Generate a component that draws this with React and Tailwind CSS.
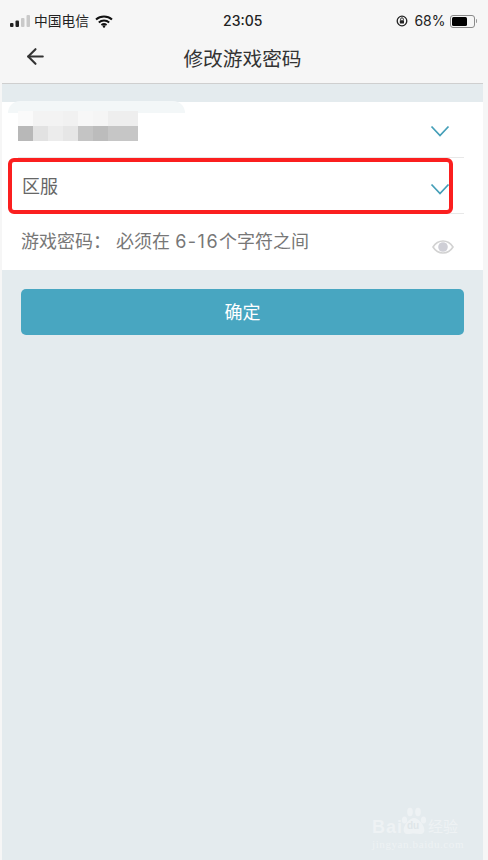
import { ArrowLeft } from 'lucide-react'

const cjk = { fontFamily: '"Inter", "Noto Sans CJK SC", sans-serif' }

const mosaicTop = ['bg-[#fafafa]', 'bg-[#f3f3f3]', 'bg-[#f3f3f3]', 'bg-[#f1f1f1]', 'bg-[#f7f7f7]', 'bg-[#f5f5f5]', 'bg-[#eeeeee]', 'bg-[#eeeeee]']
const mosaicBottom = ['bg-[#b8b8b8]', 'bg-[#e2e2e2]', 'bg-[#ececec]', 'bg-[#e6e6e6]', 'bg-[#c4c4c4]', 'bg-[#bcbcbc]', 'bg-[#c6c6c6]', 'bg-[#c6c6c6]']

const Chevron = () => (
  <svg width="20" height="12" viewBox="0 0 20 12" fill="none" stroke="#459fb8" strokeWidth="1.8">
    <path d="M1.5 1.5 L10 10.5 L18.5 1.5" />
  </svg>
)

const Signal = () => (
  <svg width="21" height="12" viewBox="0 0 21 12" className="mr-[3px]">
    <rect x="0" y="8" width="3.5" height="4" rx="1" fill="#222" />
    <rect x="5.5" y="5.5" width="3.5" height="6.5" rx="1" fill="#222" />
    <rect x="11" y="3" width="3.5" height="9" rx="1" fill="#c9c9c9" />
    <rect x="16.5" y="0" width="3.5" height="12" rx="1" fill="#c9c9c9" />
  </svg>
)

const Wifi = () => (
  <svg width="18" height="13" viewBox="0 0 18 13" fill="none" stroke="#111" strokeWidth="2">
    <path d="M1 4.5 C5.5 0.5 12.5 0.5 17 4.5" />
    <path d="M3.8 7.4 C6.8 4.9 11.2 4.9 14.2 7.4" />
    <path d="M6.4 10 C8 8.9 10 8.9 11.6 10" />
    <circle cx="9" cy="11.5" r="1.2" fill="#111" stroke="none" />
  </svg>
)

const RotationLock = () => (
  <svg width="12" height="12" viewBox="0 0 12 12" fill="none" className="mr-[6px]">
    <circle cx="6" cy="6" r="4.8" stroke="#222" strokeWidth="1.3" />
    <rect x="3.8" y="5.2" width="4.2" height="3.2" rx="0.5" fill="#222" />
    <path d="M4.6 5.2 V4.2 a1.4 1.4 0 0 1 2.8 0 V5.2" stroke="#222" strokeWidth="0.9" />
  </svg>
)

const Battery = () => (
  <div className="flex items-center ml-[4px]">
    <div className="w-[25px] h-[13px] rounded-[3px] border border-[#8a8a8a] p-[1px] flex">
      <div className="w-[15px] bg-black rounded-[1.5px]" />
    </div>
    <div className="w-[1.5px] h-[4px] bg-[#999] ml-[1px] rounded-r-sm" />
  </div>
)

const Eye = () => (
  <svg width="22" height="18" viewBox="0 0 22 18" fill="none">
    <path d="M1 9 C6 1 16 1 21 9 C16 17 6 17 1 9 Z" stroke="#d2d2d2" strokeWidth="1.6" />
    <circle cx="11" cy="9" r="4.8" fill="#cfcfd6" />
  </svg>
)

const BaiduPaw = () => (
  <svg width="26" height="28" viewBox="0 0 26 28" fill="#eef2f4">
    <ellipse cx="3.5" cy="13" rx="2.6" ry="3.6" />
    <ellipse cx="9" cy="5" rx="2.8" ry="4.2" />
    <ellipse cx="17" cy="5" rx="2.8" ry="4.2" />
    <ellipse cx="22.5" cy="13" rx="2.6" ry="3.6" />
    <path d="M13 11 C18 11 25 20 23 25 C21 28.5 16.5 26.5 13 26.5 C9.5 26.5 5 28.5 3 25 C1 20 8 11 13 11 Z" />
  </svg>
)

const App = () => {
  return (
    <div className="relative w-[488px] h-[860px] overflow-hidden bg-[#f6f6f6] pl-[2px] pr-[5px] flex" style={cjk}>
      <div className="flex-1 flex flex-col bg-[#e4ebee]">
        {/* Status bar + title */}
        <header className="h-[84px] bg-[#f6f6f6] border-b border-[#cfcfcf] flex flex-col">
          <div className="h-[40px] pt-[13px] pl-[8px] pr-[6px] flex items-start relative">
            <div className="flex items-center h-[16px]">
              <Signal />
              <span className="text-[13.75px] leading-4 text-[#222]">中国电信</span>
              <span className="ml-[6px]"><Wifi /></span>
            </div>
            <div className="absolute left-[221px] top-[13px] text-[14px] leading-4 font-medium text-[#222]">23:05</div>
            <div className="ml-auto flex items-center h-[16px]">
              <RotationLock />
              <span className="text-[14px] leading-4 text-[#222]">68%</span>
              <Battery />
            </div>
          </div>
          <div className="flex-1 relative flex items-center justify-center pb-[5px]">
            <ArrowLeft size={25} strokeWidth={2} className="absolute left-[21px] top-[4px] text-[#333]" />
            <h1 className="text-[19.7px] leading-6 font-normal text-[#333]">修改游戏密码</h1>
          </div>
        </header>

        <div className="h-[18px]" />

        {/* Form */}
        <section className="bg-white pl-[16px] pr-[19px] relative">
          <div className="absolute left-[6px] top-[-1px] w-[177px] h-[12px] rounded-t-[20px] bg-[#f3f7f8]" />
          <div className="h-[56px] border-b border-[#e8e8e8] flex items-start justify-between pr-[14px]">
            <div className="mt-[9px] relative">
              <div className="flex">
                {mosaicTop.map((c, i) => <div key={i} className={`w-[15px] h-[15px] ${c}`} />)}
              </div>
              <div className="flex">
                {mosaicBottom.map((c, i) => <div key={i} className={`w-[15px] h-[15px] ${c}`} />)}
              </div>
            </div>
            <div className="mt-[23px]"><Chevron /></div>
          </div>
          <div className="h-[56px] border-b border-[#e8e8e8] flex items-start justify-between pl-[4px] pr-[14px]">
            <span className="text-[18px] leading-6 text-[#666] mt-[17px]">区服</span>
            <div className="mt-[25px]"><Chevron /></div>
          </div>
          <div className="h-[56px] flex items-start justify-between pl-[3px] pr-[10px]">
            <span className="text-[18px] leading-6 text-[#777] mt-[16px] whitespace-nowrap">
              游戏密码： 必须在 <span className="tracking-[1.5px]">6-16</span>个字符之间
            </span>
            <div className="mt-[24px]"><Eye /></div>
          </div>
        </section>

        {/* Submit */}
        <div className="pt-[19px] pl-[19px] pr-[19px]">
          <button className="w-full h-[46px] pt-[2px] rounded-[5px] bg-[#48a6c1] text-white text-[18px] leading-6">确定</button>
        </div>
      </div>

      {/* Red annotation drawn on top of the screenshot */}
      <div className="absolute left-[8px] top-[158px] w-[445px] h-[56px] rounded-[6px] border-[4px] border-[#fb1f1f]" />

      {/* Baidu jingyan watermark */}
      <div className="absolute left-[372px] top-[807px] w-[90px] flex flex-col text-[#eef2f4]">
        <div className="flex items-end h-[28px]">
          <span className="w-[29px] text-[18px] leading-[16px] font-bold tracking-[1px] whitespace-nowrap" style={{ fontFamily: '"Liberation Sans", sans-serif' }}>Bai</span>
          <div className="relative">
            <BaiduPaw />
            <span className="absolute left-[6px] bottom-[3px] text-[10px] leading-3 font-bold text-[#dfe6e9]" style={{ fontFamily: '"Liberation Sans", sans-serif' }}>du</span>
          </div>
          <span className="text-[15px] leading-[16px] ml-[1px] whitespace-nowrap">经验</span>
        </div>
        <span className="text-[11px] leading-3 mt-[3px] tracking-[0.6px] whitespace-nowrap" style={{ fontFamily: '"Liberation Serif", serif' }}>jingyan.baidu.com</span>
      </div>
    </div>
  )
}

export default App
